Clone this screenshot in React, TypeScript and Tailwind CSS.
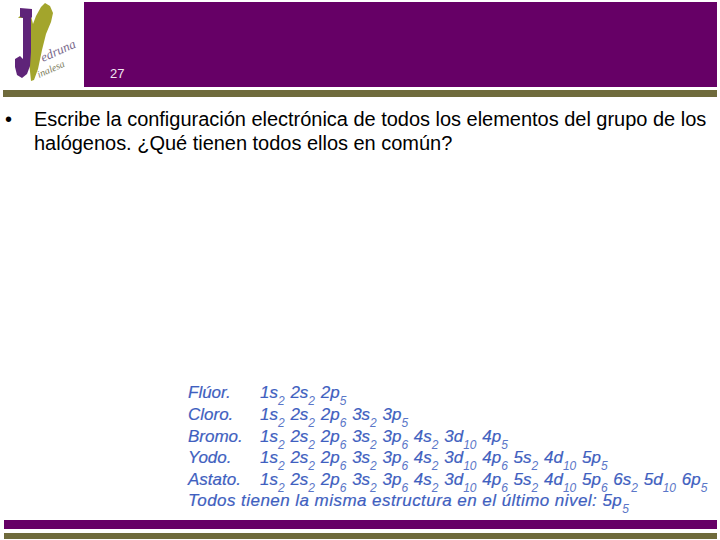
const S = ({ children }: { children: React.ReactNode }) => (
  <sub className="text-[12px] font-normal leading-none [vertical-align:-4px] mr-[1px] text-[#5a76c8] [-webkit-text-stroke:0px]">{children}</sub>
);

function Cfg({ text }: { text: string }) {
  const tokens = text.split(" ");
  return (
    <>
      {tokens.map((t, i) => {
        const m = t.match(/^(\d[a-z])(\d+)$/);
        return (
          <span key={i}>
            {m ? (
              <>
                {m[1]}
                <S>{m[2]}</S>
              </>
            ) : (
              t
            )}{" "}
          </span>
        );
      })}
    </>
  );
}

const rows = [
  ["Flúor.", "1s2 2s2 2p5"],
  ["Cloro.", "1s2 2s2 2p6 3s2 3p5"],
  ["Bromo.", "1s2 2s2 2p6 3s2 3p6 4s2 3d10 4p5"],
  ["Yodo.", "1s2 2s2 2p6 3s2 3p6 4s2 3d10 4p6 5s2 4d10 5p5"],
  ["Astato.", "1s2 2s2 2p6 3s2 3p6 4s2 3d10 4p6 5s2 4d10 5p6 6s2 5d10 6p5"],
];

function Logo() {
  return (
    <svg width="84" height="88" viewBox="0 0 84 88" className="shrink-0">
      <path d="M18 16 L24 16 L28 50 L31 79 L34 78 L38 67 L42 48 L46 32 L51 20 L53 11 L50 4 L45 1 L41 5 L36 14 L33 22 L31 14 L22 12 Z" fill="#a3a52c" />
      <path d="M20 6 L32 7 L32 15 L31 16 L31 50 L30 64 L27 72 L22 76 L17 73 L15 65 L15 57 L20 54 L23 57 L23 50 L23 16 L20 15 Z" fill="#5f2479" />
      <text x="43" y="60" fontSize="13" fontStyle="italic" fontFamily="'Liberation Serif', serif" fill="#7a6a8c" transform="rotate(-24 43 60)">edruna</text>
      <text x="39" y="76" fontSize="10" fontStyle="italic" fontFamily="'Liberation Serif', serif" fill="#7d7d60" transform="rotate(-24 39 76)">inalesa</text>
    </svg>
  );
}

export default function App() {
  return (
    <div className="w-[720px] h-[540px] bg-white overflow-hidden flex flex-col font-['Liberation_Sans',Arial,sans-serif]">
      <div className="flex h-[90px] pt-[2px] pr-[3px] items-start">
        <Logo />
        <div className="flex-1 h-[85px] bg-[#660066] flex items-end pl-[26px] pb-[5px] text-[13px] leading-[16px] text-[#f0e6f0]">27</div>
      </div>
      <div className="h-[7px] ml-[3px] mr-[3px] bg-[#6f6b3c]" />
      <div className="flex text-[20px] leading-[24px] text-black pt-[10px] pl-[5px] pr-[6px]">
        <span className="w-[29px] shrink-0">•</span>
        <p className="tracking-[-0.02px]">Escribe la configuración electrónica de todos los elementos del grupo de los halógenos. ¿Qué tienen todos ellos en común?</p>
      </div>
      <div className="flex-1 flex flex-col justify-end pl-[188px] text-[17px] italic text-[#3f5fc0] pb-[8px] [-webkit-text-stroke:0.2px]">
        {rows.map(([a, b]) => (
          <div key={a} className="flex whitespace-nowrap h-[21.6px] leading-[21.6px]">
            <span className="w-[72px] shrink-0">{a}</span>
            <span><Cfg text={b} /></span>
          </div>
        ))}
        <div className="whitespace-nowrap h-[21.6px] leading-[21.6px] tracking-[0.45px]">Todos tienen la misma estructura en el último nivel: <Cfg text="5p5" /></div>
      </div>
      <div className="h-[9px] ml-[4px] mr-[3px] bg-[#660066]" />
      <div className="h-[6px] ml-[4px] mr-[3px] mt-[4px] mb-[1px] bg-[#6f6b3c]" />
    </div>
  );
}
